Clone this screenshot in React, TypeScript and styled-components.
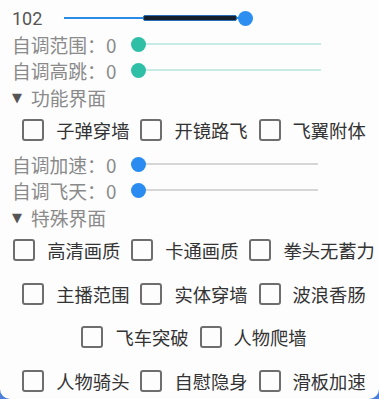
import React from "react";
import styled, { createGlobalStyle } from "styled-components";

const GlobalStyle = createGlobalStyle`
  html, body {
    margin: 0;
    padding: 0;
    background: #4b7fd9;
  }
  body {
    font-family: "Noto Sans CJK SC", "Noto Sans", sans-serif;
  }
`;

interface SliderSpec {
  label: string;
  width: number;
  track: string;
  thumb: string;
  value: number;
}

const topSliders: SliderSpec[] = [
  { label: "自调范围：0", width: 190, track: "#c9ebe5", thumb: "#2fbfa6", value: 0 },
  { label: "自调高跳：0", width: 190, track: "#c9ebe5", thumb: "#2fbfa6", value: 0 },
];

const midSliders: SliderSpec[] = [
  { label: "自调加速：0", width: 187, track: "#d6d6d6", thumb: "#2a8cf0", value: 0 },
  { label: "自调飞天：0", width: 187, track: "#d6d6d6", thumb: "#2a8cf0", value: 0 },
];

const funcRows: string[][] = [["子弹穿墙", "开镜路飞", "飞翼附体"]];

const specialRows: string[][] = [
  ["高清画质", "卡通画质", "拳头无蓄力"],
  ["主播范围", "实体穿墙", "波浪香肠"],
  ["飞车突破", "人物爬墙"],
  ["人物骑头", "自慰隐身", "滑板加速"],
];

const Slider = ({ spec }: { spec: SliderSpec }) => (
  <SliderRow>
    <Label>{spec.label}</Label>
    <Track width={spec.width}>
      <TrackLine color={spec.track} />
      <Thumb color={spec.thumb} style={{ left: `${spec.value}%` }} />
    </Track>
  </SliderRow>
);

const CheckRows = ({ rows }: { rows: string[][] }) => (
  <>
    {rows.map((row, i) => (
      <CheckRow key={i}>
        {row.map((name) => (
          <CheckItem key={name}>
            <Box />
            <CheckText>{name}</CheckText>
          </CheckItem>
        ))}
      </CheckRow>
    ))}
  </>
);

const App = () => {
  return (
    <>
      <GlobalStyle />
      <Card>
        <SliderRow>
          <Value>102</Value>
          <MainTrack>
            <MainLine />
            <MainFill />
            <MainThumb />
          </MainTrack>
        </SliderRow>
        {topSliders.map((s) => (
          <Slider key={s.label} spec={s} />
        ))}
        <Header>
          <Arrow>▼</Arrow>
          功能界面
        </Header>
        <CheckRows rows={funcRows} />
        {midSliders.map((s) => (
          <Slider key={s.label} spec={s} />
        ))}
        <Header>
          <Arrow>▼</Arrow>
          特殊界面
        </Header>
        <CheckRows rows={specialRows} />
      </Card>
    </>
  );
};

export default App;

const Card = styled.div`
  box-sizing: border-box;
  width: 379px;
  height: 399px;
  overflow: hidden;
  background: #fdfdfe;
  border-radius: 0 0 10px 10px;
  padding-top: 5px;
  display: flex;
  flex-direction: column;
`;

const SliderRow = styled.div`
  height: 26px;
  flex-shrink: 0;
  display: flex;
  align-items: center;
  padding-left: 12px;
`;

const Value = styled.span`
  width: 52px;
  font-family: "Roboto", "Noto Sans", sans-serif;
  font-size: 18px;
  color: #555;
`;

const Label = styled.span`
  font-size: 18.8px;
  color: #8a8a8a;
  margin-right: 15px;
  white-space: nowrap;
`;

const MainTrack = styled.div`
  position: relative;
  width: 189px;
  height: 15px;
`;

const MainLine = styled.div`
  position: absolute;
  left: 0;
  right: 7px;
  top: 6px;
  height: 2px;
  background: #2a8ce6;
`;

const MainFill = styled.div`
  position: absolute;
  left: 79px;
  width: 92px;
  top: 4px;
  height: 4px;
  background: #15202c;
  border: 1px solid #2a6fb5;
  border-radius: 2px;
`;

const MainThumb = styled.div`
  position: absolute;
  right: 0;
  top: 0;
  width: 15px;
  height: 15px;
  border-radius: 50%;
  background: #2b8ef0;
`;

const Track = styled.div<{ width: number }>`
  position: relative;
  width: ${(p) => p.width}px;
  height: 15px;
`;

const TrackLine = styled.div<{ color: string }>`
  position: absolute;
  left: 7px;
  right: 0;
  top: 6px;
  height: 2px;
  background: ${(p) => p.color};
`;

const Thumb = styled.div<{ color: string }>`
  position: absolute;
  top: 0;
  width: 15px;
  height: 15px;
  border-radius: 50%;
  background: ${(p) => p.color};
`;

const Header = styled.div`
  box-sizing: border-box;
  height: 25px;
  flex-shrink: 0;
  display: flex;
  align-items: center;
  padding: 3px 0 0 12px;
  font-size: 18.8px;
  color: #8a8a8a;
`;

const Arrow = styled.span`
  font-family: "DejaVu Sans", sans-serif;
  font-size: 13px;
  color: #555;
  margin-right: 9px;
`;

const CheckRow = styled.div`
  height: 43.5px;
  flex-shrink: 0;
  display: flex;
  align-items: center;
  justify-content: center;
  gap: 11px;
  padding-left: 9px;
`;

const CheckItem = styled.div`
  display: flex;
  align-items: center;
  gap: 12px;
`;

const Box = styled.div`
  box-sizing: border-box;
  width: 22px;
  height: 22px;
  border: 2px solid #6e6e6e;
  border-radius: 3px;
`;

const CheckText = styled.span`
  font-size: 18.3px;
  color: #333;
  white-space: nowrap;
`;
